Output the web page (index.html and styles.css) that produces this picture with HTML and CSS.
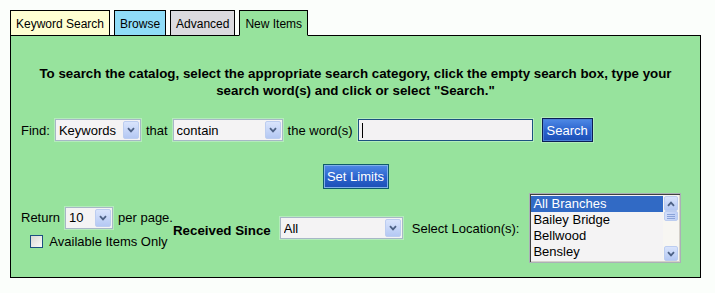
FILE: index.html
```html
<!DOCTYPE html>
<html>
<head>
<meta charset="utf-8">
<link rel="stylesheet" href="styles.css">
</head>
<body>
<div class="page">
  <div class="tabs">
    <div class="tab tab-kw">Keyword Search</div>
    <div class="tab tab-br">Browse</div>
    <div class="tab tab-adv">Advanced</div>
    <div class="tab tab-new">New Items</div>
  </div>
  <div class="panel">
    <p class="intro">To search the catalog, select the appropriate search category, click the empty search box, type your<br>search word(s) and click or select "Search."</p>

    <div class="find-row">
      <span class="lbl">Find:</span>
      <span class="combo w-kw"><select class="combo-sel"><option>Keywords</option></select><span class="arr"><svg width="8" height="6" viewBox="0 0 8 6"><path d="M1 1.2 L4 4.4 L7 1.2" fill="none" stroke="#4d6185" stroke-width="1.8"/></svg></span></span>
      <span class="lbl">that</span>
      <span class="combo w-ct"><select class="combo-sel"><option>contain</option></select><span class="arr"><svg width="8" height="6" viewBox="0 0 8 6"><path d="M1 1.2 L4 4.4 L7 1.2" fill="none" stroke="#4d6185" stroke-width="1.8"/></svg></span></span>
      <span class="lbl">the word(s)</span>
      <input class="txt" type="text">
      <button class="btn btn-search" type="button">Search</button>
    </div>

    <div class="limits">
      <button class="btn btn-limits" type="button">Set Limits</button>
    </div>

    <div class="bottom">
      <div class="left-block">
        <div class="ret-row">
          <span class="lbl">Return</span>
          <span class="combo w-ret"><select class="combo-sel"><option>10</option></select><span class="arr"><svg width="8" height="6" viewBox="0 0 8 6"><path d="M1 1.2 L4 4.4 L7 1.2" fill="none" stroke="#4d6185" stroke-width="1.8"/></svg></span></span>
          <span class="lbl">per page.</span>
        </div>
        <label class="chk-row"><input class="chk" type="checkbox"><span>Available Items Only</span></label>
      </div>
      <span class="recv">Received Since</span>
      <span class="combo w-all"><select class="combo-sel"><option>All</option></select><span class="arr"><svg width="8" height="6" viewBox="0 0 8 6"><path d="M1 1.2 L4 4.4 L7 1.2" fill="none" stroke="#4d6185" stroke-width="1.8"/></svg></span></span>
      <span class="lbl loc-lbl">Select Location(s):</span>
      <div class="listbox">
        <ul class="opts">
          <li class="sel">All Branches</li>
          <li>Bailey Bridge</li>
          <li>Bellwood</li>
          <li>Bensley</li>
        </ul>
        <div class="sbar">
          <span class="sb-btn"><svg width="8" height="6" viewBox="0 0 8 6"><path d="M1 4.8 L4 1.6 L7 4.8" fill="none" stroke="#4d6185" stroke-width="1.8"/></svg></span>
          <span class="thumb"><svg width="8" height="5" viewBox="0 0 8 5"><path d="M0 0.5 H8 M0 2.5 H8 M0 4.5 H8" stroke="#8aa3d8" stroke-width="1"/></svg></span>
          <span class="track"></span>
          <span class="sb-btn"><svg width="8" height="6" viewBox="0 0 8 6"><path d="M1 1.2 L4 4.4 L7 1.2" fill="none" stroke="#4d6185" stroke-width="1.8"/></svg></span>
        </div>
      </div>
    </div>
  </div>
</div>
</body>
</html>
```

FILE: styles.css
```css
* { box-sizing: border-box; }

body {
  margin: 0;
  background: #fbfefb;
  font-family: "Liberation Sans", Arial, sans-serif;
  font-size: 13px;
  color: #000;
}

.page {
  width: 701px;
  padding: 10px 0 0 10px;
}

.tabs {
  display: flex;
  align-items: flex-end;
  gap: 4px;
  border-bottom: 1px solid #000;
  height: 26px;
}

.tab {
  height: 25px;
  border: 1px solid #000;
  border-bottom: 0;
  padding: 2px 5px 0;
  font-size: 12px;
  line-height: 22px;
  white-space: nowrap;
}

.tab-kw { background: #ffffd2; }
.tab-br { background: #8fdcf8; }
.tab-adv { background: #dbdadf; }
.tab-new {
  background: #97e39d;
  height: 26px;
  border-bottom: 1px solid #97e39d;
  margin-bottom: -1px;
}

.panel {
  border: 1px solid #000;
  border-top: 0;
  background: #97e39d;
  padding: 29px 10px 14px;
}

.intro {
  margin: 0;
  text-align: center;
  font-weight: bold;
  font-size: 13.33px;
  line-height: 17px;
}

.find-row {
  display: flex;
  align-items: center;
  gap: 5px;
  height: 24px;
  margin-top: 19px;
}

.lbl { white-space: nowrap; }

.combo {
  display: inline-flex;
  align-items: center;
  height: 22px;
  border: 1px solid #a7b7c6;
  background: #f4f3f4;
  box-shadow: 0 0 0 1px #b4ecbb;
}

.combo-sel {
  appearance: none;
  -webkit-appearance: none;
  border: 0;
  background: transparent;
  font: 13px "Liberation Sans", Arial, sans-serif;
  color: #000;
  height: 20px;
  padding: 0 0 0 3px;
  margin: 0;
  flex: 1;
  min-width: 0;
  outline: none;
}

.arr {
  width: 16px;
  height: 18px;
  margin-right: 1px;
  border: 1px solid #bccdf0;
  border-radius: 2px;
  background: linear-gradient(#d9e4fc, #b4c8f3);
  display: flex;
  align-items: center;
  justify-content: center;
  flex: none;
}

.w-kw { width: 86px; }
.w-ct { width: 110px; }
.w-ret { width: 48px; }
.w-all { width: 123px; margin-left: 9px; }

.txt {
  width: 175px;
  height: 22px;
  border: 1px solid #1c5180;
  background: #f3f2f3 linear-gradient(#000, #000) no-repeat 3px 3px / 1px 15px;
  box-shadow: 0 0 0 1px #b4ecbb;
  margin: 0;
  padding: 0;
}

.btn {
  font: 13px "Liberation Sans", Arial, sans-serif;
  color: #fff;
  margin: 0;
  padding: 0;
  cursor: pointer;
}

.btn-search {
  width: 51px;
  height: 24px;
  margin-left: 4px;
  border: 1px solid #0b1f55;
  background: linear-gradient(#4f8ae6, #2a62cc 55%, #1c4fb6);
  box-shadow: inset 0 0 0 1px #4a7fd8, 0 0 0 1px #b4ecbb;
}

.limits {
  display: flex;
  justify-content: center;
  margin-top: 22px;
}

.btn-limits {
  width: 66px;
  height: 25px;
  border: 1px solid #0e5c6a;
  background: linear-gradient(#4f8ae6, #2a62cc 55%, #1c4fb6);
  box-shadow: inset 0 0 0 1px #7fb0ea;
}

.bottom {
  display: flex;
  align-items: center;
  margin-top: 4px;
}

.left-block {
  display: flex;
  flex-direction: column;
  align-items: center;
  gap: 5px;
}

.ret-row {
  display: flex;
  align-items: center;
  gap: 5px;
}

.chk-row {
  display: flex;
  align-items: center;
  height: 16px;
  padding-left: 4px;
}

.chk {
  appearance: none;
  -webkit-appearance: none;
  width: 13px;
  height: 13px;
  margin: 0 6px 0 0;
  border: 1px solid #1c5180;
  background: linear-gradient(135deg, #d9d9d3, #fbfbfa);
}

.recv {
  font-weight: bold;
  font-size: 13.33px;
  white-space: nowrap;
  margin-left: 0;
  padding-top: 5px;
}

.loc-lbl { margin-left: 9px; }

.listbox {
  display: flex;
  width: 152px;
  height: 70px;
  margin-left: 10px;
  border: 1px solid #aab0b6;
  padding: 1px;
  background: #f4f3f4;
  box-shadow: inset 1px 1px 0 #404040, inset -1px -1px 0 #d4d0c8;
}

.opts {
  list-style: none;
  margin: 0;
  padding: 1px 0 0 0;
  flex: 1;
  font-size: 13px;
  line-height: 16px;
}

.opts li {
  padding-left: 2px;
  white-space: nowrap;
}

.opts li.sel {
  background: #316ac5;
  color: #fff;
}

.sbar {
  width: 16px;
  display: flex;
  flex-direction: column;
  background: #f7f6f2;
  padding-top: 1px;
}

.sb-btn {
  height: 15px;
  margin: 0 1px;
  border: 1px solid #bccdf0;
  border-radius: 2px;
  background: linear-gradient(#d9e4fc, #b4c8f3);
  display: flex;
  align-items: center;
  justify-content: center;
}

.thumb {
  height: 10px;
  margin: 0 1px;
  border: 1px solid #bccdf0;
  border-radius: 2px;
  background: linear-gradient(90deg, #d2defa, #bfd0f6);
  display: flex;
  align-items: center;
  justify-content: center;
}

.track { flex: 1; }
```
